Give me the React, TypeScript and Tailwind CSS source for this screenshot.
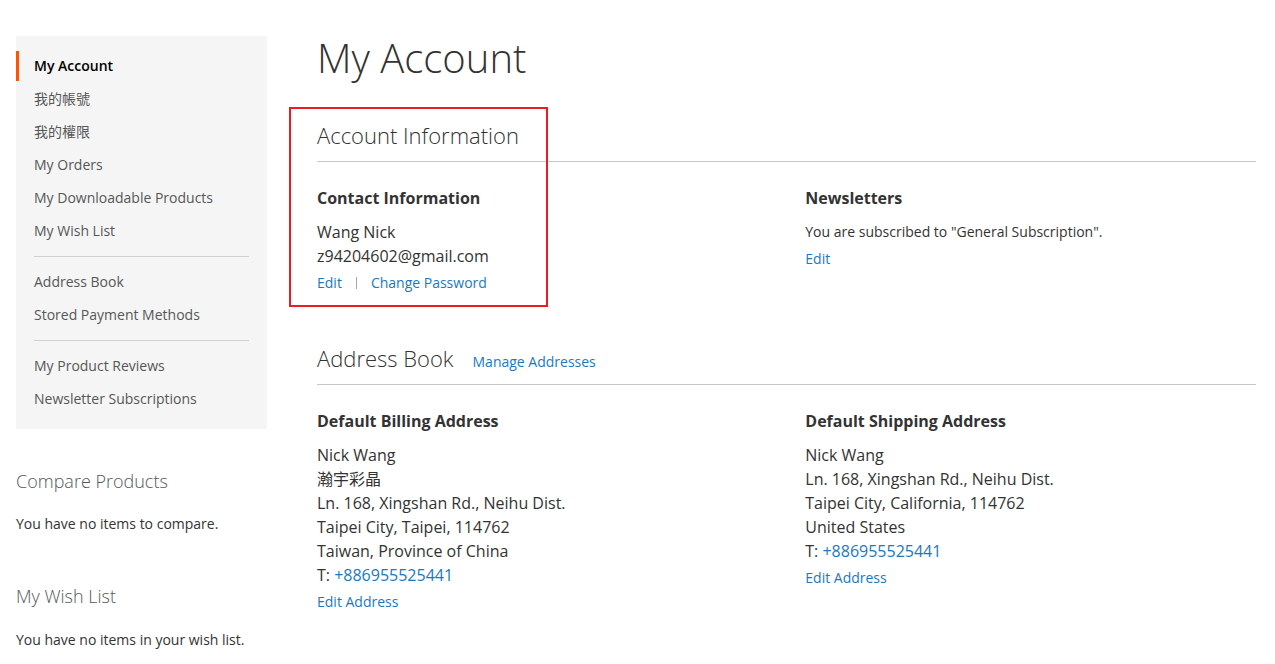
import React from "react";

const font = "font-['Open_Sans','Noto_Sans_CJK_TC',sans-serif]";

function NavItem({ label, active }: { label: string; active?: boolean }) {
  if (active) {
    return (
      <div className="h-[30px] flex items-center border-l-[3px] border-[#ff5501] pl-[15px] text-[14px] leading-[20px] font-semibold text-black">
        {label}
      </div>
    );
  }
  return (
    <a className="h-[30px] flex items-center pl-[18px] text-[14px] leading-[20px] text-[#575757] cursor-pointer">
      {label}
    </a>
  );
}

function Delim() {
  return <div className="mx-[18px] my-[10px] h-px bg-[#d1d1d1]" />;
}

function Line({ children }: { children: React.ReactNode }) {
  return <div className="h-[24px] leading-[24px] whitespace-nowrap">{children}</div>;
}

export default function App() {
  return (
    <div className={`${font} min-h-[664px] bg-white text-[#333] flex pl-[16px] pr-[19px] pt-[36px]`}>
      <aside className="w-[251px] shrink-0">
        <nav className="bg-[#f5f5f5] py-[15px]">
          <div className="flex flex-col gap-[3px]">
            <NavItem label="My Account" active />
            <NavItem label="我的帳號" />
            <NavItem label="我的權限" />
            <NavItem label="My Orders" />
            <NavItem label="My Downloadable Products" />
            <NavItem label="My Wish List" />
          </div>
          <Delim />
          <div className="flex flex-col gap-[3px]">
            <NavItem label="Address Book" />
            <NavItem label="Stored Payment Methods" />
          </div>
          <Delim />
          <div className="flex flex-col gap-[3px]">
            <NavItem label="My Product Reviews" />
            <NavItem label="Newsletter Subscriptions" />
          </div>
        </nav>
        <div className="mt-[40px]">
          <div className="text-[18px] leading-[24px] font-light text-[#575757]">Compare Products</div>
          <div className="mt-[21px] text-[14px] leading-[20px]">You have no items to compare.</div>
        </div>
        <div className="mt-[50px]">
          <div className="text-[18px] leading-[24px] font-light text-[#575757]">My Wish List</div>
          <div className="mt-[22px] text-[14px] leading-[20px]">You have no items in your wish list.</div>
        </div>
      </aside>

      <main className="ml-[50px] flex-1 relative">
        <h1 className="text-[40px] leading-[48px] font-light mt-[-2px]">My Account</h1>

        <section className="mt-[40px]">
          <div className="border-b border-[#c6c6c6] pb-[11px]">
            <h2 className="text-[22px] leading-[28px] font-light mt-[-1px] mb-[1px]">Account Information</h2>
          </div>
          <div className="mt-[24px] flex justify-between">
            <div className="w-[48%]">
              <h3 className="text-[16px] leading-[24px] font-bold">Contact Information</h3>
              <div className="mt-[10px] text-[16px]">
                <Line>Wang Nick</Line>
                <Line>z94204602@gmail.com</Line>
              </div>
              <div className="mt-[5px] h-[20px] text-[14px] leading-[20px] flex items-center">
                <a className="text-[#1979c3] cursor-pointer">Edit</a>
                <span className="inline-block w-px h-[12px] bg-[#a6a6a6] mx-[14px]" />
                <a className="text-[#1979c3] cursor-pointer">Change Password</a>
              </div>
            </div>
            <div className="w-[48%]">
              <h3 className="text-[16px] leading-[24px] font-bold">Newsletters</h3>
              <p className="mt-[10px] text-[14px] leading-[24px]">
                You are subscribed to "General Subscription".
              </p>
              <div className="mt-[5px] text-[14px] leading-[20px]">
                <a className="text-[#1979c3] cursor-pointer">Edit</a>
              </div>
            </div>
          </div>
        </section>

        <section className="mt-[51px]">
          <div className="border-b border-[#c6c6c6] pb-[12px] flex items-baseline">
            <h2 className="text-[22px] leading-[28px] font-light">Address Book</h2>
            <a className="ml-[19px] text-[14px] leading-[20px] text-[#1979c3] cursor-pointer">Manage Addresses</a>
          </div>
          <div className="mt-[24px] flex justify-between">
            <div className="w-[48%]">
              <h3 className="text-[16px] leading-[24px] font-bold">Default Billing Address</h3>
              <div className="mt-[10px] text-[16px]">
                <Line>Nick Wang</Line>
                <Line>瀚宇彩晶</Line>
                <Line>Ln. 168, Xingshan Rd., Neihu Dist.</Line>
                <Line>Taipei City, Taipei, 114762</Line>
                <Line>Taiwan, Province of China</Line>
                <Line>
                  T: <a className="text-[#1979c3] cursor-pointer">+886955525441</a>
                </Line>
              </div>
              <div className="mt-[5px] text-[14px] leading-[20px]">
                <a className="text-[#1979c3] cursor-pointer">Edit Address</a>
              </div>
            </div>
            <div className="w-[48%]">
              <h3 className="text-[16px] leading-[24px] font-bold">Default Shipping Address</h3>
              <div className="mt-[10px] text-[16px]">
                <Line>Nick Wang</Line>
                <Line>Ln. 168, Xingshan Rd., Neihu Dist.</Line>
                <Line>Taipei City, California, 114762</Line>
                <Line>United States</Line>
                <Line>
                  T: <a className="text-[#1979c3] cursor-pointer">+886955525441</a>
                </Line>
              </div>
              <div className="mt-[5px] text-[14px] leading-[20px]">
                <a className="text-[#1979c3] cursor-pointer">Edit Address</a>
              </div>
            </div>
          </div>
        </section>

        <div className="absolute top-[71px] left-[-28px] w-[259px] h-[200px] border-2 border-[#ed1c24] pointer-events-none" />
      </main>
    </div>
  );
}
